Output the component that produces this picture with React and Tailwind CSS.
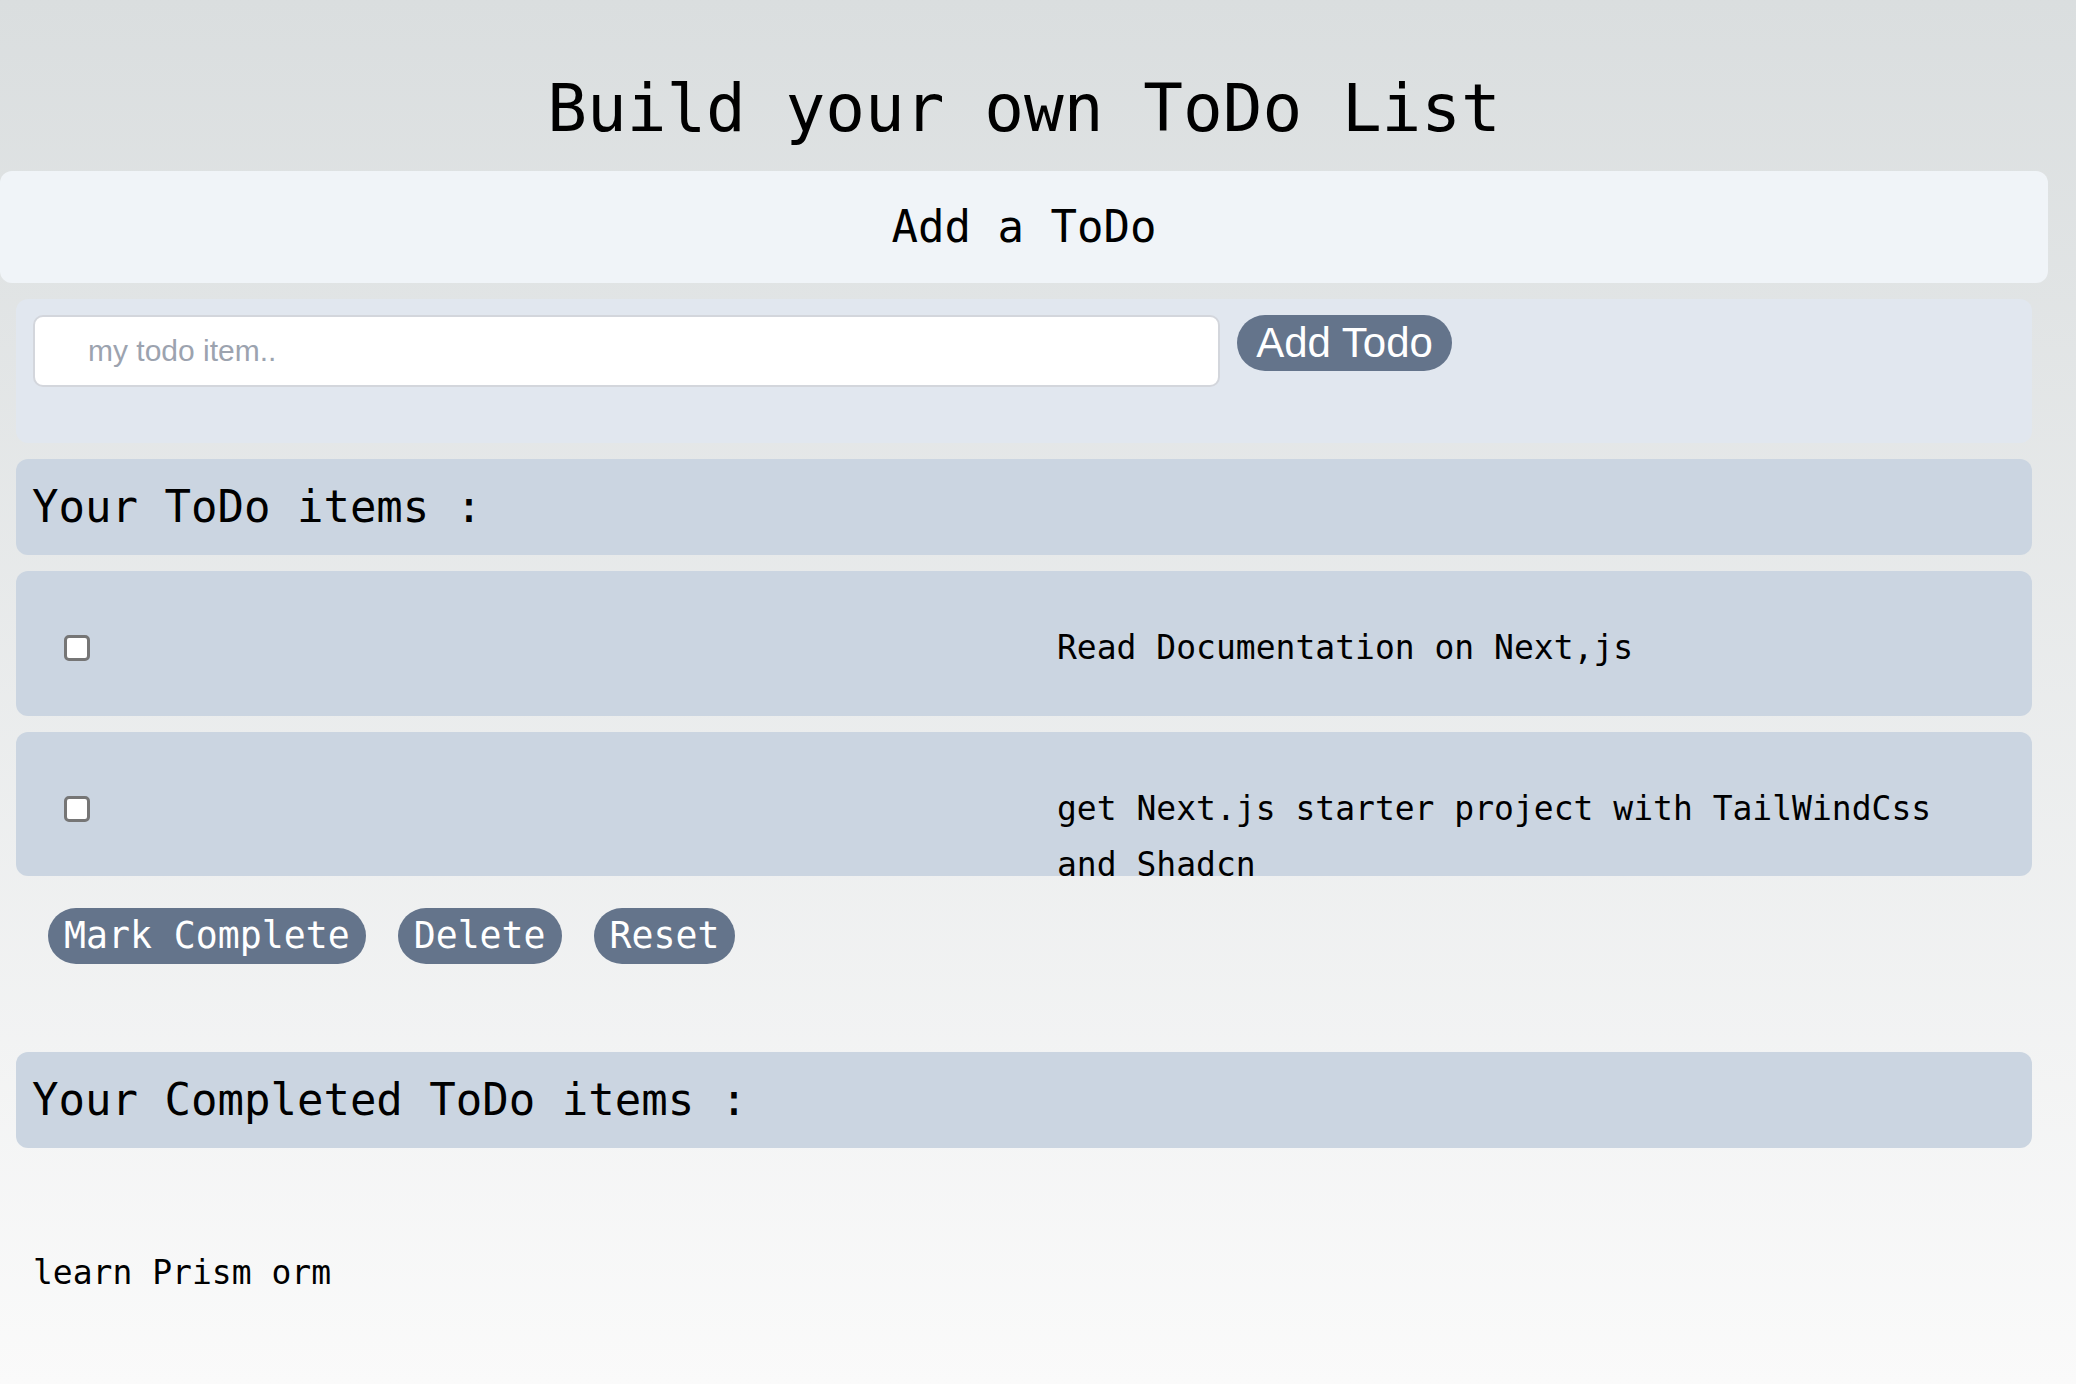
export default function App() {
  const mono = "font-['DejaVu_Sans_Mono',monospace]";
  return (
    <div className={`min-h-screen w-full bg-linear-to-b from-[#dadedf] to-[#fafafa] text-black ${mono}`}>
      <div className="w-[2048px]">
        <div className="h-[171px] pt-[76px]">
          <h1 className="text-center text-[66px] leading-[66px]">Build your own ToDo List</h1>
        </div>

        <div className="flex h-[112px] items-center justify-center rounded-xl bg-[#f0f4f8] text-[44px]">
          Add a ToDo
        </div>

        <div className="mx-[16px] mt-[16px] flex h-[144px] items-start gap-[17px] rounded-xl bg-[#e1e7ef] pl-[17px] pt-[16px]">
          <input
            type="text"
            placeholder="my todo item.."
            className="h-[72px] w-[1187px] rounded-[10px] border-2 border-[#d3d6dc] bg-white pl-[53px] font-['Liberation_Sans',Arial,sans-serif] text-[30px] outline-none placeholder:text-[#9ca3af]"
          />
          <button className="flex h-[56px] w-[215px] items-center justify-center rounded-full bg-[#64748b] font-['Liberation_Sans',Arial,sans-serif] text-[42px] leading-none text-white">
            Add Todo
          </button>
        </div>

        <div className="mx-[16px] mt-[16px] flex h-[96px] items-center rounded-xl bg-[#cbd5e1] pl-[16px] text-[44px]">
          Your ToDo items :
        </div>

        <div className="mx-[16px] mt-[16px] grid h-[145px] grid-cols-2 items-start rounded-xl bg-[#cbd5e1] pt-[49px]">
          <div className="flex h-[56px] items-center pl-[48px]">
            <input
              type="checkbox"
              className="h-[26px] w-[26px] appearance-none rounded-[5px] border-[3px] border-[#767676] bg-white"
            />
          </div>
          <p className="pl-[33px] pr-[64px] text-[33px] leading-[56px]">Read Documentation on Next,js</p>
        </div>

        <div className="mx-[16px] mt-[16px] grid h-[144px] grid-cols-2 items-start rounded-xl bg-[#cbd5e1] pt-[49px]">
          <div className="flex h-[56px] items-center pl-[48px]">
            <input
              type="checkbox"
              className="h-[26px] w-[26px] appearance-none rounded-[5px] border-[3px] border-[#767676] bg-white"
            />
          </div>
          <p className="pl-[33px] pr-[64px] text-[33px] leading-[56px]">
            get Next.js starter project with TailWindCss and Shadcn
          </p>
        </div>

        <div className="mx-[16px] mt-[32px] flex gap-[32px] pl-[32px]">
          <button className="h-[56px] rounded-full bg-[#64748b] px-[16px] text-[36.5px] leading-[56px] text-white">
            Mark Complete
          </button>
          <button className="h-[56px] rounded-full bg-[#64748b] px-[16px] text-[36.5px] leading-[56px] text-white">
            Delete
          </button>
          <button className="h-[56px] rounded-full bg-[#64748b] px-[16px] text-[36.5px] leading-[56px] text-white">
            Reset
          </button>
        </div>

        <div className="mx-[16px] mt-[88px] flex h-[96px] items-center rounded-xl bg-[#cbd5e1] pl-[16px] text-[44px]">
          Your Completed ToDo items :
        </div>

        <p className="mt-[97px] pl-[33px] text-[33px] leading-[56px]">learn Prism orm</p>
      </div>
    </div>
  );
}
